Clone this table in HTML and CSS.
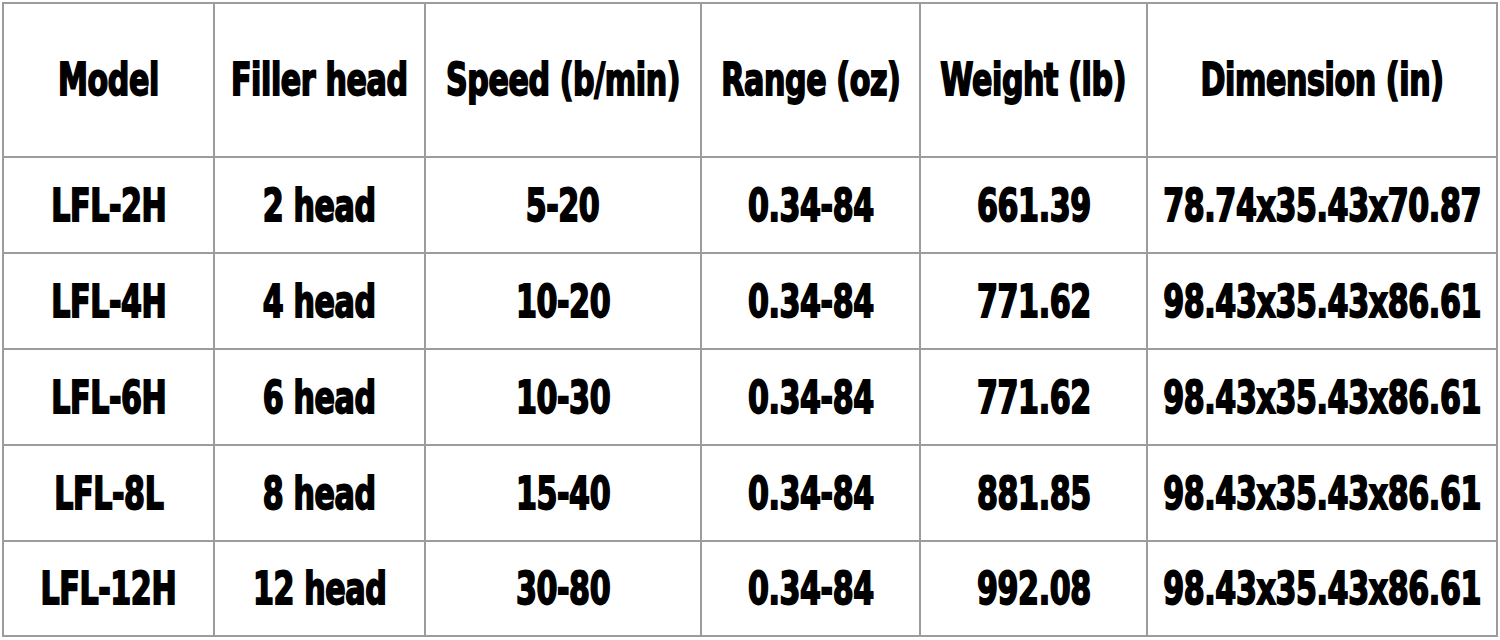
FILE: index.html
```html
<!DOCTYPE html>
<html>
<head>
<meta charset="utf-8">
<link rel="stylesheet" href="styles.css">
</head>
<body>
<div class="spec">
  <div class="cell head"><span>Model</span></div>
  <div class="cell head"><span>Filler head</span></div>
  <div class="cell head"><span>Speed (b/min)</span></div>
  <div class="cell head"><span>Range (oz)</span></div>
  <div class="cell head"><span>Weight (lb)</span></div>
  <div class="cell head"><span>Dimension (in)</span></div>

  <div class="cell"><span>LFL-2H</span></div>
  <div class="cell"><span>2 head</span></div>
  <div class="cell"><span>5-20</span></div>
  <div class="cell"><span>0.34-84</span></div>
  <div class="cell"><span>661.39</span></div>
  <div class="cell"><span>78.74x35.43x70.87</span></div>

  <div class="cell"><span>LFL-4H</span></div>
  <div class="cell"><span>4 head</span></div>
  <div class="cell"><span>10-20</span></div>
  <div class="cell"><span>0.34-84</span></div>
  <div class="cell"><span>771.62</span></div>
  <div class="cell"><span>98.43x35.43x86.61</span></div>

  <div class="cell"><span>LFL-6H</span></div>
  <div class="cell"><span>6 head</span></div>
  <div class="cell"><span>10-30</span></div>
  <div class="cell"><span>0.34-84</span></div>
  <div class="cell"><span>771.62</span></div>
  <div class="cell"><span>98.43x35.43x86.61</span></div>

  <div class="cell"><span>LFL-8L</span></div>
  <div class="cell"><span>8 head</span></div>
  <div class="cell"><span>15-40</span></div>
  <div class="cell"><span>0.34-84</span></div>
  <div class="cell"><span>881.85</span></div>
  <div class="cell"><span>98.43x35.43x86.61</span></div>

  <div class="cell"><span>LFL-12H</span></div>
  <div class="cell"><span>12 head</span></div>
  <div class="cell"><span>30-80</span></div>
  <div class="cell"><span>0.34-84</span></div>
  <div class="cell"><span>992.08</span></div>
  <div class="cell"><span>98.43x35.43x86.61</span></div>
</div>
</body>
</html>
```
FILE: styles.css
```css
html, body {
  margin: 0;
  padding: 0;
  background: #ffffff;
}
body {
  padding: 2px 0 0 2px;
}
.spec {
  display: grid;
  grid-template-columns: 211px 211px 276px 219px 227px 350px;
  grid-template-rows: 154px 96px 96px 96px 96px 95px;
  border-left: 2px solid #9c9c9c;
  border-top: 2px solid #9c9c9c;
  width: max-content;
}
.cell {
  border-right: 2px solid #9c9c9c;
  border-bottom: 2px solid #9c9c9c;
  display: flex;
  align-items: center;
  justify-content: center;
  overflow: visible;
  font-family: "DejaVu Sans Condensed", "DejaVu Sans", sans-serif;
  font-weight: bold;
  font-size: 44px;
  color: #000;
  -webkit-text-stroke: 1.8px #000;
  white-space: nowrap;
  min-width: 0;
}
.cell span {
  display: inline-block;
  transform: scaleX(0.76);
  transform-origin: center center;
  letter-spacing: -0.5px;
}
.head {
  padding-bottom: 2px;
}
```
